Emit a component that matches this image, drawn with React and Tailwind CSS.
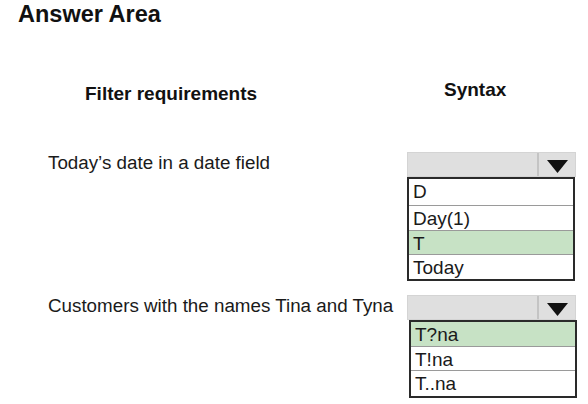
export default function App() {
  const font = { fontFamily: '"Liberation Sans", Arial, sans-serif' };

  const Arrow = () => (
    <svg width="21" height="13" viewBox="0 0 21 13" className="block">
      <polygon points="0,0 21,0 10.5,13" fill="#111" />
    </svg>
  );

  const Combo = () => (
    <div className="flex h-[25px] w-[169px] border border-[#d4d4d4] bg-[#dfdfdf]">
      <div className="flex-1" />
      <div className="w-[2px] bg-[#c4c4c4]" />
      <div className="flex w-[36px] justify-center pt-[7px]">
        <Arrow />
      </div>
    </div>
  );

  const List = ({ items, offset }) => (
    <div className={`flex w-[168px] flex-col border-2 border-[#2a2a2a] bg-white ${offset ? "ml-[2px]" : ""}`}>
      {items.map((it, i) => (
        <div
          key={i}
          style={{ height: it.h }}
          className={`pl-[4px] pt-[2px] text-[19px] leading-[21px] text-[#1a1a1a] ${
            i > 0 ? "border-t border-[#9a9a9a]" : ""
          } ${it.g ? "bg-[#c7e2c5]" : "bg-white"}`}
        >
          {it.t}
        </div>
      ))}
    </div>
  );

  return (
    <div className="h-[404px] w-[588px] overflow-hidden bg-white text-[#1a1a1a]" style={font}>
      <div className="pl-[18px] pt-[1px] text-[23.5px] font-bold leading-[26px] text-[#111]">Answer Area</div>

      <div className="flex items-start">
        <div className="mt-[56px] w-[444px] pl-[85px] text-[19px] font-bold leading-[22px] text-[#111]">
          Filter requirements
        </div>
        <div className="mt-[52px] text-[19px] font-bold leading-[22px] text-[#111]">Syntax</div>
      </div>

      <div className="mt-[47px] flex items-start pl-[48px]">
        <div className="w-[359px] text-[18.8px] leading-[22px]">Today’s date in a date field</div>
        <div className="flex flex-col">
          <Combo />
          <List
            items={[
              { t: "D", h: 26 },
              { t: "Day(1)", h: 25 },
              { t: "T", h: 24, g: true },
              { t: "Today", h: 25 },
            ]}
          />
        </div>
      </div>

      <div className="mt-[14px] flex items-start pl-[48px]">
        <div className="w-[359px] text-[18.8px] leading-[22px]">Customers with the names Tina and Tyna</div>
        <div className="flex flex-col">
          <Combo />
          <List
            offset
            items={[
              { t: "T?na", h: 24, g: true },
              { t: "T!na", h: 24 },
              { t: "T..na", h: 26 },
            ]}
          />
        </div>
      </div>
    </div>
  );
}
